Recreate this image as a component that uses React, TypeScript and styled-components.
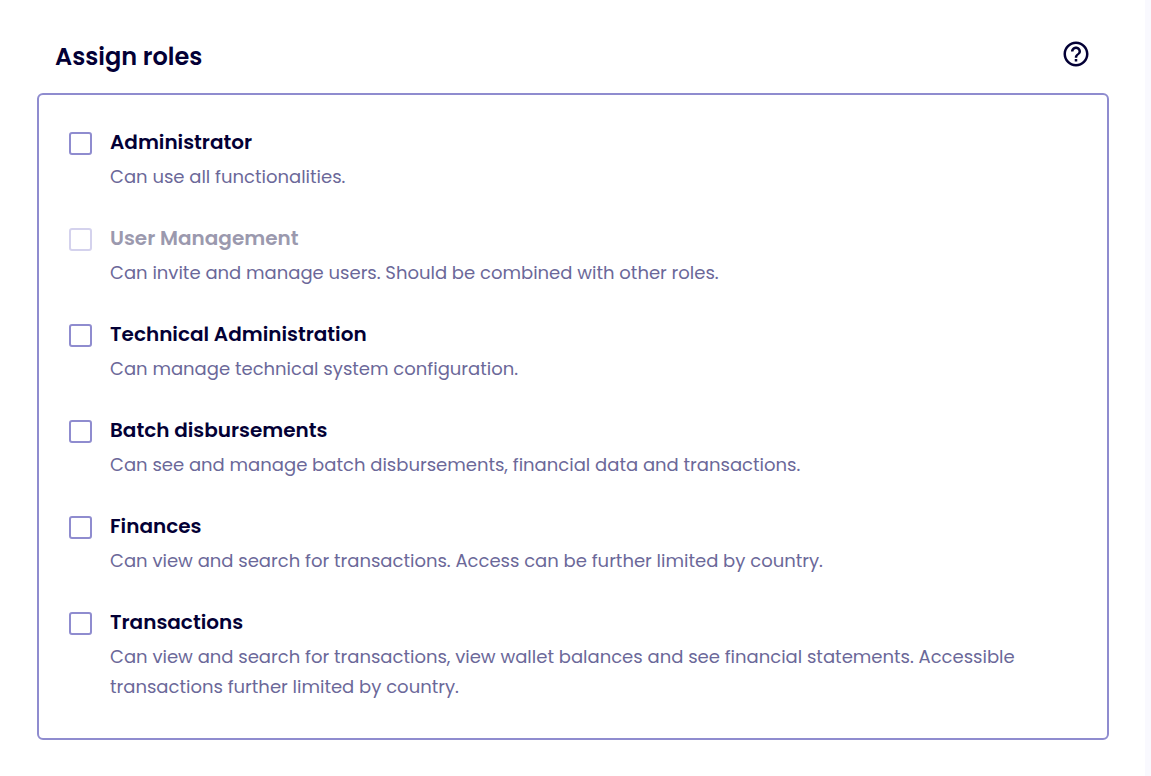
import React from "react";
import styled, { createGlobalStyle } from "styled-components";

const GlobalStyle = createGlobalStyle`
  * { box-sizing: border-box; }
  body { margin: 0; background: #ffffff; font-family: Poppins, Inter, "Open Sans", sans-serif; color: #030035; }
`;

const Page = styled.main`
  min-height: 100vh;
  padding: 37px 36px 36px 37px;
  border-right: 6px solid #f9f9fe;
`;

const Header = styled.header`
  display: flex;
  align-items: flex-start;
  justify-content: space-between;
  margin-bottom: 18px;
  padding: 2px 18px 0;
`;

const Title = styled.h1`
  margin: 0;
  font-size: 24px;
  line-height: 36px;
  font-weight: 600;
`;

const HelpButton = styled.button`
  display: flex;
  margin: 0;
  padding: 0;
  border: 0;
  background: none;
  color: inherit;
  cursor: pointer;
`;

const RoleList = styled.fieldset`
  display: flex;
  flex-direction: column;
  gap: 31px;
  min-width: 0;
  margin: 0;
  padding: 32px 30px 36px;
  border: 2px solid #8f8ccf;
  border-radius: 6px;
`;

const Role = styled.div`
  display: grid;
  grid-template-columns: 23px minmax(0, 1fr);
  column-gap: 18px;
`;

const Checkbox = styled.input`
  appearance: none;
  width: 23px;
  height: 23px;
  margin: 5px 0 0;
  border: 2px solid #8f8ccf;
  border-radius: 3px;
  background: #ffffff;
  &:disabled { border-color: #d4d2ed; }
  &:checked { background: #8f8ccf; }
`;

const Name = styled.label<{ $muted?: boolean }>`
  font-size: 20px;
  line-height: 30px;
  font-weight: 600;
  color: ${(p) => (p.$muted ? "#9b99ae" : "#030035")};
`;

const Description = styled.p`
  grid-column: 2;
  margin: 5px 0 0;
  font-size: 18px;
  line-height: 30px;
  color: #6b6899;
`;

const roles = [
  { id: "administrator", name: "Administrator", text: "Can use all functionalities." },
  { id: "users", name: "User Management", text: "Can invite and manage users. Should be combined with other roles.", disabled: true },
  { id: "technical", name: "Technical Administration", text: "Can manage technical system configuration." },
  { id: "batch", name: "Batch disbursements", text: "Can see and manage batch disbursements, financial data and transactions." },
  { id: "finances", name: "Finances", text: "Can view and search for transactions. Access can be further limited by country." },
  { id: "transactions", name: "Transactions", text: "Can view and search for transactions, view wallet balances and see financial statements. Accessible transactions further limited by country." },
];

export default function App() {
  return (
    <>
      <GlobalStyle />
      <Page>
        <Header>
          <Title id="roles-title">Assign roles</Title>
          <HelpButton type="button" aria-label="Help">
            <svg width="30" height="30" viewBox="0 0 24 24" fill="currentColor" aria-hidden="true">
              <path d="M11 18h2v-2h-2v2zm1-16C6.48 2 2 6.48 2 12s4.48 10 10 10 10-4.48 10-10S17.52 2 12 2zm0 18c-4.41 0-8-3.59-8-8s3.59-8 8-8 8 3.59 8 8-3.59 8-8 8zm0-14c-2.21 0-4 1.79-4 4h2c0-1.1.9-2 2-2s2 .9 2 2c0 2-3 1.75-3 5h2c0-2.25 3-2.5 3-5 0-2.21-1.79-4-4-4z" />
            </svg>
          </HelpButton>
        </Header>
        <RoleList aria-labelledby="roles-title">
          {roles.map((role) => (
            <Role key={role.id}>
              <Checkbox type="checkbox" id={role.id} disabled={role.disabled} aria-describedby={`${role.id}-text`} />
              <Name htmlFor={role.id} $muted={role.disabled}>{role.name}</Name>
              <Description id={`${role.id}-text`}>{role.text}</Description>
            </Role>
          ))}
        </RoleList>
      </Page>
    </>
  );
}
